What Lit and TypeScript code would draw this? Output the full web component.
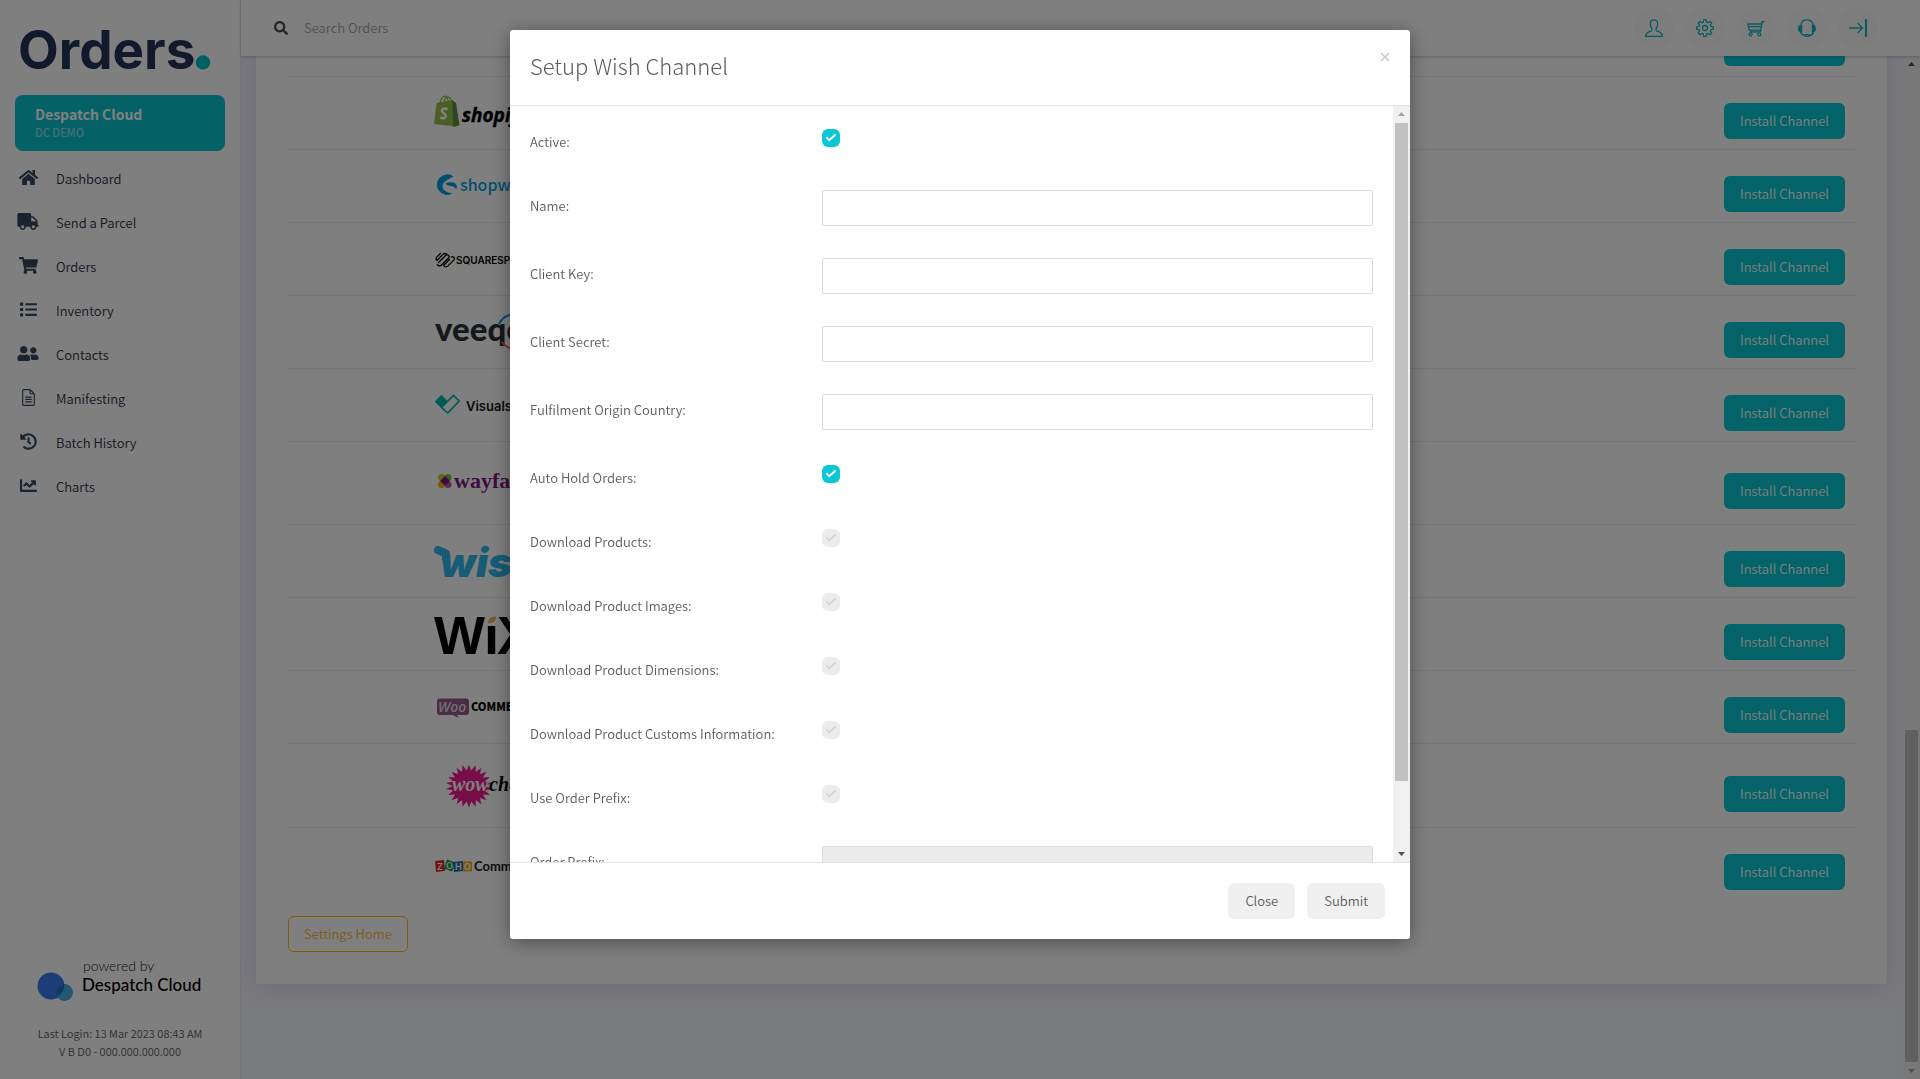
import { LitElement, html, svg, css, TemplateResult, SVGTemplateResult } from "lit";
import { customElement, property, state } from "lit/decorators.js";

/* ---------- data ---------- */

interface NavItem {
  label: string;
  viewBox: string;
  width: number;
  art: SVGTemplateResult;
}

interface Channel {
  name: string;
  height: number;
  art: SVGTemplateResult;
}

interface Field {
  id: string;
  label: string;
  kind: "text" | "check";
  checked?: boolean;
  disabled?: boolean;
}

const NAV: NavItem[] = [
  {
    label: "Dashboard",
    viewBox: "0 0 576 512",
    width: 19,
    art: svg`<path d="M280.37 148.26L96 300.11V464a16 16 0 0 0 16 16l112.06-.29a16 16 0 0 0 15.92-16V368a16 16 0 0 1 16-16h64a16 16 0 0 1 16 16v95.64a16 16 0 0 0 16 16.05L464 480a16 16 0 0 0 16-16V300L295.67 148.26a12.19 12.19 0 0 0-15.3 0zM571.6 251.47L488 182.56V44.05a12 12 0 0 0-12-12h-56a12 12 0 0 0-12 12v72.61L318.47 43a48 48 0 0 0-61 0L4.34 251.47a12 12 0 0 0-1.6 16.9l25.5 31A12 12 0 0 0 45.15 301l235.22-193.74a12.19 12.19 0 0 1 15.3 0L530.9 301a12 12 0 0 0 16.9-1.6l25.5-31a12 12 0 0 0-1.7-16.93z"/>`,
  },
  {
    label: "Send a Parcel",
    viewBox: "0 0 640 512",
    width: 22,
    art: svg`<path d="M624 352h-16V243.9c0-12.7-5.1-24.9-14.1-33.9L494 110.1c-9-9-21.2-14.1-33.9-14.1H416V48c0-26.5-21.5-48-48-48H48C21.5 0 0 21.5 0 48v320c0 26.5 21.5 48 48 48h16c0 53 43 96 96 96s96-43 96-96h128c0 53 43 96 96 96s96-43 96-96h48c8.8 0 16-7.2 16-16v-32c0-8.8-7.2-16-16-16zM160 464c-26.5 0-48-21.5-48-48s21.5-48 48-48 48 21.5 48 48-21.5 48-48 48zm320 0c-26.5 0-48-21.5-48-48s21.5-48 48-48 48 21.5 48 48-21.5 48-48 48zm80-208H416V144h44.1l99.9 99.9V256z"/>`,
  },
  {
    label: "Orders",
    viewBox: "0 0 576 512",
    width: 19,
    art: svg`<path d="M528.12 301.319l47.273-208C578.806 78.301 567.391 64 551.99 64H159.208l-9.166-44.81C147.758 8.021 137.93 0 126.529 0H24C10.745 0 0 10.745 0 24v16c0 13.255 10.745 24 24 24h69.883l70.248 343.435C147.325 417.1 136 435.222 136 456c0 30.928 25.072 56 56 56s56-25.072 56-56c0-15.674-6.447-29.835-16.824-40h209.647C430.447 426.165 424 440.326 424 456c0 30.928 25.072 56 56 56s56-25.072 56-56c0-22.172-12.888-41.332-31.579-50.405l5.517-24.276c3.413-15.018-8.002-29.319-23.403-29.319H218.117l-6.545-32h293.145c11.206 0 20.92-7.754 23.403-18.681z"/>`,
  },
  {
    label: "Inventory",
    viewBox: "0 0 512 512",
    width: 17,
    art: svg`<rect x="0" y="48" width="96" height="96" rx="16"/><rect x="0" y="208" width="96" height="96" rx="16"/><rect x="0" y="368" width="96" height="96" rx="16"/><rect x="160" y="64" width="352" height="64" rx="16"/><rect x="160" y="224" width="352" height="64" rx="16"/><rect x="160" y="384" width="352" height="64" rx="16"/>`,
  },
  {
    label: "Contacts",
    viewBox: "0 0 640 512",
    width: 22,
    art: svg`<path d="M192 256c61.9 0 112-50.1 112-112S253.9 32 192 32 80 82.1 80 144s50.1 112 112 112zm76.8 32h-8.3c-20.8 10-43.9 16-68.5 16s-47.6-6-68.5-16h-8.3C51.6 288 0 339.6 0 403.2V432c0 26.5 21.5 48 48 48h288c26.5 0 48-21.5 48-48v-28.8c0-63.6-51.6-115.2-115.2-115.2zM480 256c53 0 96-43 96-96s-43-96-96-96-96 43-96 96 43 96 96 96zm48 32h-3.8c-13.9 4.8-28.6 8-44.2 8s-30.3-3.2-44.2-8H432c-20.4 0-39.2 5.9-55.7 15.4 24.4 26.3 39.7 61.2 39.7 99.8v38.4c0 2.2-.5 4.3-.6 6.4H592c26.5 0 48-21.5 48-48 0-61.9-50.1-112-112-112z"/>`,
  },
  {
    label: "Manifesting",
    viewBox: "0 0 384 512",
    width: 13,
    art: svg`<path fill="none" stroke="currentColor" stroke-width="34" stroke-linejoin="round" d="M240 17H50a33 33 0 0 0-33 33v412a33 33 0 0 0 33 33h284a33 33 0 0 0 33-33V144L240 17v110a17 17 0 0 0 17 17h110"/><path d="M96 224h192v36H96zM96 296h192v36H96zM96 368h192v36H96z"/>`,
  },
  {
    label: "Batch History",
    viewBox: "0 0 512 512",
    width: 17,
    art: svg`<path d="M504 255.531c.253 136.64-111.18 248.372-247.82 248.468-59.015.042-113.223-20.53-155.822-54.911-11.077-8.94-11.905-25.541-1.839-35.607l11.267-11.267c8.609-8.609 22.353-9.551 31.891-1.984C173.062 425.135 212.781 440 256 440c101.705 0 184-82.311 184-184 0-101.705-82.311-184-184-184-48.814 0-93.149 18.969-126.068 49.932l50.754 50.754c10.08 10.08 2.941 27.314-11.313 27.314H24c-8.837 0-16-7.163-16-16V38.627c0-14.254 17.234-21.393 27.314-11.314l49.372 49.372C129.209 34.136 189.552 8 256 8c136.81 0 247.747 110.78 248 247.531zm-180.912 78.784l9.823-12.63c8.138-10.463 6.253-25.542-4.21-33.679L288 256.349V152c0-13.255-10.745-24-24-24h-16c-13.255 0-24 10.745-24 24v135.651l65.409 50.874c10.463 8.137 25.541 6.253 33.679-4.21z"/>`,
  },
  {
    label: "Charts",
    viewBox: "0 0 512 512",
    width: 17,
    art: svg`<path d="M496 384H64V80c0-8.84-7.16-16-16-16H16C7.16 64 0 71.16 0 80v336c0 17.67 14.33 32 32 32h464c8.84 0 16-7.16 16-16v-32c0-8.84-7.16-16-16-16zM464 96H345.94c-21.38 0-32.09 25.85-16.97 40.97l32.4 32.4L288 242.75l-73.37-73.37c-12.5-12.5-32.76-12.5-45.25 0l-68.69 68.69c-6.25 6.25-6.25 16.38 0 22.63l22.62 22.62c6.25 6.25 16.38 6.25 22.63 0L192 237.25l73.37 73.37c12.5 12.5 32.76 12.5 45.25 0l96-96 32.4 32.4c15.12 15.12 40.97 4.41 40.97-16.97V112c.01-8.84-7.15-16-15.99-16z"/>`,
  },
];

const TOOLS: { label: string; art: SVGTemplateResult }[] = [
  {
    label: "Account",
    art: svg`<path d="M9 .8c-2.300 0-3.700 1.600-3.700 4 0 2.100.6 3.800 1.700 4.900.3 1-.1 1.800-.9 2.300C4 13 .8 13.600.7 17.300h16.600c-.1-3.700-3.300-4.300-5.400-5.300-.8-.5-1.200-1.300-.9-2.300 1.100-1.100 1.700-2.800 1.700-4.900 0-2.400-1.400-4-3.700-4z"/>`,
  },
  {
    label: "Settings",
    art: svg`<circle cx="9" cy="9" r="2.500"/><path d="M7.800.8h2.400l.5 2.300 1.300.6 2.100-1.300 1.600 1.600-1.300 2.100.6 1.300 2.300.5v2.300l-2.300.5-.6 1.300 1.300 2.100-1.600 1.600-2.100-1.300-1.300.6-.5 2.300H7.800l-.5-2.300-1.300-.6-2.100 1.300-1.600-1.600 1.300-2.100-.6-1.300-2.300-.5V7.900l2.300-.5.6-1.300-1.300-2.100 1.600-1.600L6 3.700l1.300-.6z"/>`,
  },
  {
    label: "Basket",
    art: svg`<path d="M17.500 2.700h-2.300l-1.700 10.100H2.700M14.700 5H1l1.300 6.200h11.500M1.500 7.700h12.700"/><circle cx="3.600" cy="15.400" r="1.500"/><circle cx="12.300" cy="15.400" r="1.500"/>`,
  },
  {
    label: "Support",
    art: svg`<path d="M2.700 5.800C3.500 2.700 5.900.8 9 .8s5.500 1.900 6.300 5M15.300 13c-.5 2.400-1.900 3.400-3.600 3.500M2.700 13c.6 1.900 1.700 3.100 4 3.300"/><path fill="currentColor" stroke="none" d="M2.900 5.800h1.300v7.600H2.900C1.100 13.400 0 12 0 9.600s1.100-3.800 2.900-3.800zM15.100 5.800h-1.300v7.600h1.300c1.800 0 2.900-1.400 2.900-3.800s-1.100-3.800-2.900-3.800z"/><rect x="6.900" y="15.600" width="4.600" height="1.700" rx=".8"/>`,
  },
  {
    label: "Log out",
    art: svg`<path d="M0 9h13.200M8.800 4.200L13.500 9l-4.700 4.800"/><path stroke-width="2" d="M17 .2v17.600"/>`,
  },
];

const burst = (cx: number, cy: number, outer: number, inner: number, n: number): string =>
  Array.from({ length: n * 2 }, (_, i) => {
    const r = i % 2 ? inner : outer;
    const a = (Math.PI * i) / n + Math.PI / n;
    return `${(cx + r * Math.cos(a)).toFixed(1)},${(cy + r * Math.sin(a) * 0.94).toFixed(1)}`;
  }).join(" ");

const CHANNELS: Channel[] = [
  { name: "", height: 60, art: svg`` },
  {
    name: "Shopify",
    height: 60,
    art: svg`<path fill="#95bf47" d="M4.500 20l16-3 2.500 26.500L2 41z"/><path fill="#5e8e3e" d="M20 17l4 3 3.500 22.300L21.500 44z"/><path fill="none" stroke="#95bf47" stroke-width="1.300" d="M8 20c.8-4 3-6.500 5-6.800 2.200 0 3 2 3 5M12 19c.5-3 2-5 4-5.200 1.500 0 2.600 1.400 3 3.600"/><path fill="none" stroke="#fff" stroke-width="2.600" d="M15.500 26.200c-3.300-1.500-5.700-.2-5.700 1.600 0 2.500 4.200 2.400 4 5.300-.2 2.400-3 2.900-5.600 1.300"/><text x="30" y="39" font-family="Open Sans" font-size="19" font-weight="700" font-style="italic" stroke="#000" stroke-width=".4">shopify</text>`,
  },
  {
    name: "Shopware",
    height: 60,
    art: svg`<path fill="#009fe3" d="M21.500 20.500A10.300 10.300 0 1 0 20.500 37.500C16.500 37 10.500 35 10.500 30.300c0-4 4-6.300 11-9.800z"/><path fill="#009fe3" d="M13.500 27.500c3-1.500 7.500-1.700 10 .2 1.600 1.400 1.800 3.700.8 5.800-1.300-2.700-4-3-6.600-3.700-2-.5-3.700-1-4.200-2.300z"/><text x="28" y="35" font-size="16" font-weight="500" fill="#009fe3">shopware</text>`,
  },
  {
    name: "Squarespace",
    height: 60,
    art: svg`<g fill="none" stroke="#000" stroke-width="1.300" stroke-linecap="round"><path d="M6.500 33.500l7.300-7.300a2 2 0 0 1 2.800 2.800l-6.800 6.800a3.200 3.200 0 0 1-4.500 0M14.500 24.800a3.200 3.200 0 0 0-3.500.6l-6 6a2.200 2.200 0 0 1-.3-3.300l4-3.800"/><path d="M17.500 30.500l-6 6M12.500 37.500a3.200 3.200 0 0 0 3.500-.6l6-6a2 2 0 0 0-2.800-2.800"/></g><text x="24" y="35" font-family="Inter" font-size="10" font-weight="600">SQUARESPACE</text>`,
  },
  {
    name: "Veeqo",
    height: 60,
    art: svg`<text x="3" y="39" font-family="Lato" font-size="33" font-weight="900" fill="#2b3038">veeqo</text><path fill="none" stroke="#0a9bf0" stroke-width="2" d="M67 22a17 17 0 0 1 28-4"/><path fill="none" stroke="#f0604a" stroke-width="2" d="M70 40a17 17 0 0 0 25 3"/>`,
  },
  {
    name: "Visualsoft",
    height: 60,
    art: svg`<path fill="#00b8a5" d="M2.700 26.500l6.700-6.700 6.200 6.200-6.500 7z"/><path fill="none" stroke="#00b8a5" stroke-width="1.700" d="M9.500 32.300l11.900-11.900 5.800 5.600-11.600 12z"/><text x="34" y="36" font-family="Inter" font-size="13" font-weight="600" fill="#151515">Visualsoft</text>`,
  },
  {
    name: "Wayfair",
    height: 70,
    art: svg`<circle cx="9.500" cy="29.500" r="3.500" fill="#c3cf21"/><circle cx="16" cy="29.500" r="3.500" fill="#7fb93c"/><circle cx="9.500" cy="36.500" r="3.500" fill="#f5b800"/><circle cx="16" cy="36.500" r="3.500" fill="#bb5ca6"/><path fill="#7f187f" d="M13 28l5 5-5 4.500L8 33z"/><text x="22" y="40" font-family="Liberation Serif" font-size="22" font-weight="700" fill="#7f187f">wayfair</text>`,
  },
  {
    name: "Wish",
    height: 60,
    art: svg`<path fill="none" stroke="#2fb7ec" stroke-width="8" stroke-linecap="round" stroke-linejoin="round" d="M6 19l8 3.500v5"/><text x="8" y="46" font-family="Inter" font-size="41" font-weight="900" font-style="italic" fill="#2fb7ec">wish</text>`,
  },
  {
    name: "Wix",
    height: 60,
    art: svg`<text y="50" font-family="Liberation Sans" font-size="54" font-weight="700"><tspan x="2">W</tspan><tspan x="52">ı</tspan><tspan x="65">X</tspan></text><path fill="#fbb161" d="M56 19.500c0-4.500 2-7 8-7 .3 3.500-1.500 6.500-8 7z"/>`,
  },
  {
    name: "WooCommerce",
    height: 60,
    art: svg`<path fill="#96588a" d="M8 21.500h26a3 3 0 0 1 3 3V35a3 3 0 0 1-3 3h-9l2 3-6.500-3H8a3 3 0 0 1-3-3V24.500a3 3 0 0 1 3-3z"/><text x="6" y="35" font-family="Open Sans" font-size="14" font-weight="600" font-style="italic" fill="#e4dde2">Woo</text><text x="39" y="34" font-size="11" font-weight="900">COMMERCE</text>`,
  },
  {
    name: "Wowcher",
    height: 71,
    art: svg`<polygon fill="#ec1b8e" points=${burst(37, 36, 23, 16.5, 22)}/><text x="20" y="41" font-family="Liberation Serif" font-size="20" font-weight="700" font-style="italic" fill="#fff">wow</text><text x="57" y="41" font-family="Liberation Serif" font-size="20" font-weight="700" font-style="italic">cher</text>`,
  },
  {
    name: "Zoho Commerce",
    height: 60,
    art: svg`<path fill="#e42527" d="M3 27l9-1 1 11-9 1z"/><path fill="#089949" d="M15 25.500l8 3-3 9-8-3z"/><path fill="#226db4" d="M21 28l10-1 0 10-9 1z"/><path fill="#f9b21d" d="M31 27.500h9v10h-9z"/><g font-family="Inter" font-size="9" font-weight="600" fill="#fff"><text x="5" y="36">Z</text><text x="14" y="35">O</text><text x="23" y="36">H</text><text x="32" y="36">O</text></g><text x="42" y="37" font-family="Lato" font-size="13" font-weight="700" fill="#1a1a1a">Commerce</text>`,
  },
];

const FIELDS: Field[] = [
  { id: "active", label: "Active:", kind: "check", checked: true },
  { id: "name", label: "Name:", kind: "text" },
  { id: "client-key", label: "Client Key:", kind: "text" },
  { id: "client-secret", label: "Client Secret:", kind: "text" },
  { id: "origin-country", label: "Fulfilment Origin Country:", kind: "text" },
  { id: "auto-hold", label: "Auto Hold Orders:", kind: "check", checked: true },
  { id: "dl-products", label: "Download Products:", kind: "check" },
  { id: "dl-images", label: "Download Product Images:", kind: "check" },
  { id: "dl-dimensions", label: "Download Product Dimensions:", kind: "check" },
  { id: "dl-customs", label: "Download Product Customs Information:", kind: "check" },
  { id: "use-prefix", label: "Use Order Prefix:", kind: "check" },
  { id: "order-prefix", label: "Order Prefix:", kind: "text", disabled: true },
];

const FONT = css`"Noto Sans CJK SC", "Noto Sans", sans-serif`;

/* ---------- scroll rail ---------- */

@customElement("scroll-rail")
export class ScrollRail extends LitElement {
  @property({ type: Number }) before = 0;
  @property({ type: Number }) thumb = 1;
  @property({ type: Number }) after = 0;

  static styles = css`
    :host {
      display: flex;
      flex: none;
      flex-direction: column;
      width: 17px;
      background: #f1f1f1;
    }
    .arrow {
      flex: none;
      display: block;
      width: 17px;
      height: 17px;
      fill: #505050;
    }
    .arrow.end {
      fill: #a3a3a3;
    }
    .thumb {
      margin: 0 2px;
      background: #c1c1c1;
    }
  `;

  render() {
    return html`
      <svg class="arrow ${this.before ? "" : "end"}" viewBox="0 0 17 17"><path d="M5 10h7L8.500 6z" /></svg>
      <div style="flex:${this.before} 1 0"></div>
      <div class="thumb" style="flex:${this.thumb} 1 0"></div>
      <div style="flex:${this.after} 1 0"></div>
      <svg class="arrow ${this.after ? "" : "end"}" viewBox="0 0 17 17"><path d="M5 7h7l-3.500 4z" /></svg>
    `;
  }
}

/* ---------- sidebar ---------- */

@customElement("side-bar")
export class SideBar extends LitElement {
  static styles = css`
    :host {
      display: flex;
      flex-direction: column;
      flex: none;
      box-sizing: border-box;
      width: 241px;
      padding: 16px 15px 19px;
      border-right: 1px solid #e6e8f0;
      background: #fff;
      font-family: ${FONT};
    }
    .brand {
      display: block;
      width: 210px;
      height: 64px;
    }
    .account {
      display: flex;
      flex-direction: column;
      margin-top: 15px;
      padding: 9px 20px 11px;
      border-radius: 8px;
      background: #09c4ce;
      color: #fff;
    }
    .company {
      font-size: 14px;
      line-height: 20px;
      font-weight: 700;
    }
    .unit {
      font-size: 11px;
      line-height: 16px;
      font-weight: 500;
      opacity: 0.5;
    }
    nav {
      display: flex;
      flex-direction: column;
      margin-top: 6px;
    }
    .item {
      display: flex;
      align-items: center;
      gap: 17px;
      height: 44px;
      padding-left: 2px;
      color: #2c2e3e;
      font-size: 13px;
      line-height: 20px;
      font-weight: 350;
      text-decoration: none;
    }
    .icon {
      display: flex;
      justify-content: center;
      width: 22px;
      height: 20px;
      color: #34495e;
    }
    .icon svg {
      height: 17px;
      fill: currentColor;
    }
    .foot {
      display: flex;
      flex-direction: column;
      align-items: center;
      gap: 22px;
      margin-top: auto;
      color: #5c5c5c;
      font-size: 11px;
      line-height: 18px;
      font-weight: 350;
      text-align: center;
    }
    .powered {
      width: 168px;
      height: 44px;
    }
  `;

  render() {
    return html`
      <svg class="brand" viewBox="0 0 210 64" role="img" aria-label="Orders">
        <text x="3" y="53" font-family="Inter" font-size="53" font-weight="700" fill="#22345a">Orders</text>
        <circle cx="188" cy="46.500" r="7.200" fill="#00c2c7" />
      </svg>
      <div class="account">
        <span class="company">Despatch Cloud</span>
        <span class="unit">DC DEMO</span>
      </div>
      <nav>
        ${NAV.map(
          (n) => html`<a class="item" href="#">
            <span class="icon"><svg viewBox=${n.viewBox} width=${n.width}>${n.art}</svg></span>
            <span>${n.label}</span>
          </a>`
        )}
      </nav>
      <div class="foot">
        <svg class="powered" viewBox="0 0 168 44" role="img" aria-label="powered by Despatch Cloud">
          <circle cx="15" cy="28" r="13.500" fill="#3a7bf2" />
          <circle cx="28.500" cy="34.500" r="8.500" fill="#4aaee6" />
          <path d="M28.500 26.100a13.500 13.500 0 0 1-7.400 12.600 8.500 8.500 0 0 1 7.400-12.600z" fill="#2470c8" />
          <text x="47" y="13" font-family="Lato" font-size="14" fill="#1a1a1a">powered by</text>
          <text x="46" y="33" font-family="Lato" font-size="17" font-weight="500" fill="#000">Despatch Cloud</text>
        </svg>
        <div>
          <div>Last Login: 13 Mar 2023 08:43 AM</div>
          <div>V B D0 - 000.000.000.000</div>
        </div>
      </div>
    `;
  }
}

/* ---------- setup dialog ---------- */

@customElement("channel-dialog")
export class ChannelDialog extends LitElement {
  @state() private fields = FIELDS;

  static styles = css`
    :host {
      position: fixed;
      inset: 0;
      z-index: 10;
      display: flex;
      align-items: flex-start;
      justify-content: center;
      background: rgba(0, 0, 0, 0.5);
      font-family: ${FONT};
      color: #5c5c5c;
    }
    .dialog {
      width: 100%;
      max-width: 900px;
      margin: 30px;
      border-radius: 3px;
      background: #fff;
      box-shadow: 0 3px 20px rgba(0, 0, 0, 0.4);
      overflow: hidden;
    }
    header {
      display: flex;
      justify-content: space-between;
      align-items: flex-start;
      padding: 17px 20px 22px;
      border-bottom: 1px solid #e3e3e3;
    }
    h2 {
      margin: 0;
      font-size: 22px;
      line-height: 36px;
      font-weight: 300;
    }
    .x {
      display: flex;
      padding: 5px 0;
      border: 0;
      background: none;
    }
    .x svg {
      width: 10px;
      height: 10px;
      stroke: #c8c8c8;
      stroke-width: 1.5;
    }
    .body {
      display: flex;
      height: calc(70vh + 1px);
    }
    form {
      flex: 1;
      min-width: 0;
      padding: 4px 20px 0;
      overflow: hidden;
    }
    .row {
      display: grid;
      grid-template-columns: minmax(0, 292px) minmax(0, 1fr);
      align-items: start;
      box-sizing: border-box;
    }
    .row.text {
      height: 68px;
      padding-top: 16px;
    }
    .row.check {
      height: 64px;
      padding-top: 19px;
    }
    label {
      font-size: 13px;
      line-height: 20px;
      font-weight: 350;
    }
    .text label {
      padding-top: 6px;
    }
    .check label {
      padding-top: 3px;
    }
    .box {
      box-sizing: border-box;
      width: 100%;
      height: 36px;
      margin: 0;
      padding: 8px 12px;
      border: 1px solid #dcdcdc;
      border-radius: 2px;
      background: #fff;
      font: inherit;
      font-size: 13px;
    }
    .box:disabled {
      background: #ececec;
    }
    .tick {
      display: grid;
      width: 18px;
      height: 18px;
    }
    .tick > * {
      grid-area: 1 / 1;
    }
    .tick input {
      appearance: none;
      width: 18px;
      height: 18px;
      margin: 0;
      border-radius: 6px;
      background: #ebecee;
    }
    .tick input:checked {
      background: #0bc6d6;
    }
    .tick svg {
      width: 18px;
      height: 18px;
      fill: none;
      stroke: #d4d4d4;
      stroke-width: 2;
      pointer-events: none;
    }
    .tick input:checked + svg {
      stroke: #fff;
    }
    footer {
      display: flex;
      justify-content: flex-end;
      gap: 12px;
      padding: 20px 25px;
      border-top: 1px solid #e3e3e3;
    }
    .btn {
      height: 36px;
      padding: 0 17px;
      border: 0;
      border-radius: 6px;
      background: #f0f0f0;
      color: #5c5c5c;
      font: inherit;
      font-size: 13px;
      font-weight: 350;
    }
  `;

  private control(f: Field): TemplateResult {
    return f.kind === "text"
      ? html`<input class="box" type="text" id=${f.id} ?disabled=${f.disabled} />`
      : html`<span class="tick">
          <input type="checkbox" id=${f.id} .checked=${!!f.checked} />
          <svg viewBox="0 0 18 18"><path d="M4.300 8.200l3 3 6.200-5.700" /></svg>
        </span>`;
  }

  render() {
    return html`
      <section class="dialog" role="dialog" aria-labelledby="title">
        <header>
          <h2 id="title">Setup Wish Channel</h2>
          <button class="x" type="button" aria-label="Close dialog">
            <svg viewBox="0 0 10 10"><path d="M1 1l8 8M9 1L1 9" /></svg>
          </button>
        </header>
        <div class="body">
          <form>
            ${this.fields.map(
              (f) => html`<div class="row ${f.kind}">
                <label for=${f.id}>${f.label}</label>
                ${this.control(f)}
              </div>`
            )}
          </form>
          <scroll-rail .before=${0} .thumb=${658} .after=${64}></scroll-rail>
        </div>
        <footer>
          <button class="btn" type="button">Close</button>
          <button class="btn" type="button">Submit</button>
        </footer>
      </section>
    `;
  }
}

/* ---------- page ---------- */

@customElement("app-root")
export class AppRoot extends LitElement {
  static styles = css`
    :host {
      display: flex;
      height: 100vh;
      overflow: hidden;
      background: #f3f4fb;
      font-family: ${FONT};
      font-size: 13px;
      line-height: 20px;
      font-weight: 350;
    }
    .main {
      display: flex;
      flex: 1;
      flex-direction: column;
      min-width: 0;
    }
    .top {
      z-index: 1;
      display: flex;
      align-items: center;
      height: 56px;
      padding: 0 42px 0 33px;
      background: #fff;
      box-shadow: 0 1px 3px rgba(40, 40, 70, 0.25);
    }
    .search {
      display: flex;
      flex: 1;
      align-items: center;
      gap: 16px;
    }
    .search svg {
      width: 14px;
      height: 14px;
      fill: #4a4a4a;
    }
    .search input {
      flex: 1;
      padding: 0;
      border: 0;
      outline: 0;
      font: inherit;
    }
    .search input::placeholder {
      color: #a0a0a0;
      opacity: 1;
    }
    .tools {
      display: flex;
      gap: 11px;
    }
    .tool {
      display: flex;
      align-items: center;
      justify-content: center;
      width: 40px;
      height: 40px;
      padding: 0;
      border: 0;
      border-radius: 50%;
      background: #fbfbfb;
      color: #12b5bd;
    }
    .tool svg {
      width: 18px;
      height: 18px;
      overflow: visible;
      fill: none;
      stroke: currentColor;
      stroke-width: 1.3;
    }
    .view {
      display: flex;
      flex: 1;
      min-height: 0;
    }
    .scroller {
      display: flex;
      flex: 1;
      flex-direction: column;
      justify-content: flex-end;
      min-width: 0;
      padding: 0 16px 95px 15px;
      overflow: hidden;
    }
    .card {
      flex: none;
      padding: 32px;
      border-radius: 3px;
      background: #fff;
      box-shadow: 0 2px 24px rgba(69, 65, 110, 0.16);
    }
    table {
      width: 100%;
      border-collapse: collapse;
    }
    td {
      padding: 6px 0;
      border-top: 1px solid #ebebee;
      vertical-align: middle;
    }
    .logo {
      padding-left: 144px;
    }
    .logo svg {
      display: block;
      width: 180px;
      font-family: ${FONT};
    }
    .act {
      padding: 0 10px 0 0;
      text-align: right;
    }
    .install {
      height: 36px;
      margin-top: 16px;
      padding: 0 16px;
      border: 0;
      border-radius: 6px;
      background: #09c6d0;
      color: #fff;
      font: inherit;
    }
    .home {
      display: inline-flex;
      align-items: center;
      box-sizing: border-box;
      height: 36px;
      margin-top: 16px;
      padding: 0 15px;
      border: 1px solid #ffb800;
      border-radius: 6px;
      color: #ffb338;
      text-decoration: none;
    }
  `;

  render() {
    return html`
      <side-bar></side-bar>
      <div class="main">
        <div class="top">
          <label class="search">
            <svg viewBox="0 0 512 512">
              <path d="M505 442.7L405.3 343c-4.500-4.500-10.600-7-17-7H372c27.600-35.300 44-79.700 44-128C416 93.100 322.900 0 208 0S0 93.100 0 208s93.100 208 208 208c48.300 0 92.700-16.400 128-44v16.300c0 6.400 2.500 12.500 7 17l99.700 99.700c9.400 9.400 24.600 9.400 33.900 0l28.300-28.300c9.400-9.400 9.400-24.600.1-34zM208 336c-70.700 0-128-57.200-128-128 0-70.700 57.200-128 128-128 70.700 0 128 57.200 128 128 0 70.700-57.200 128-128 128z" />
            </svg>
            <input type="search" placeholder="Search Orders" aria-label="Search Orders" />
          </label>
          <div class="tools">
            ${TOOLS.map(
              (t) => html`<button class="tool" type="button" aria-label=${t.label}>
                <svg viewBox="0 0 18 18">${t.art}</svg>
              </button>`
            )}
          </div>
        </div>
        <div class="view">
          <div class="scroller">
            <div class="card">
              <table>
                <tbody>
                  ${CHANNELS.map(
                    (c) => html`<tr>
                      <td class="logo">
                        <svg height=${c.height} viewBox="0 0 180 ${c.height}" aria-label=${c.name}>${c.art}</svg>
                      </td>
                      <td class="act"><button class="install" type="button">Install Channel</button></td>
                    </tr>`
                  )}
                </tbody>
              </table>
              <a class="home" href="#">Settings Home</a>
            </div>
          </div>
          <scroll-rail .before=${657} .thumb=${332} .after=${0}></scroll-rail>
        </div>
      </div>
      <channel-dialog></channel-dialog>
    `;
  }
}
